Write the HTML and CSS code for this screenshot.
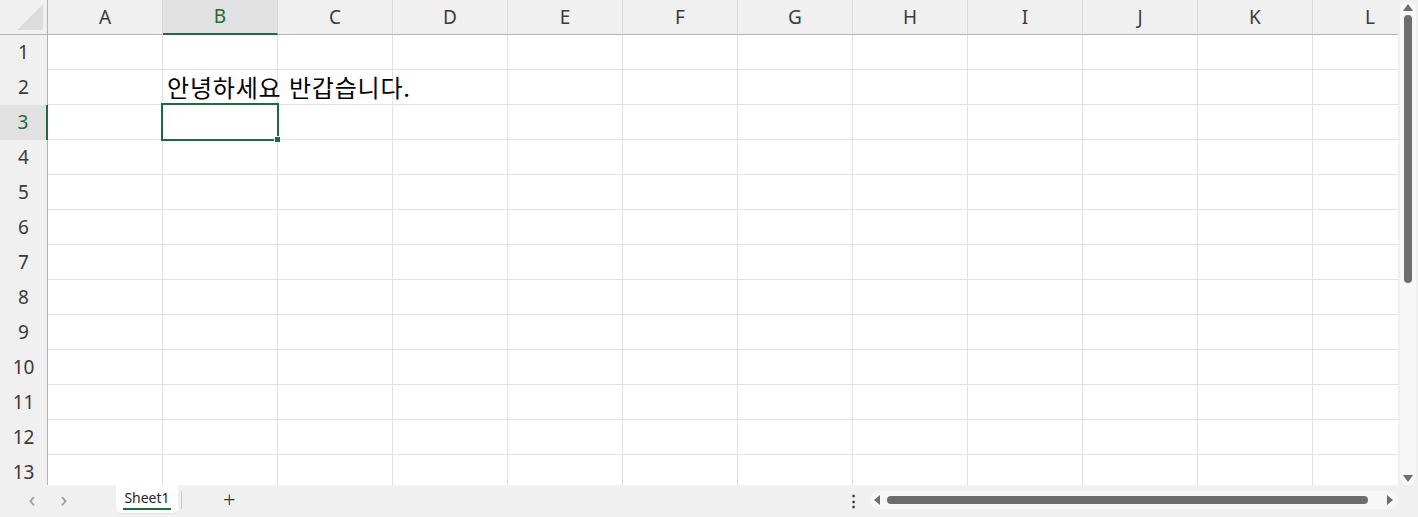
FILE: index.html
```html
<!DOCTYPE html>
<html lang="ko">
<head>
  <meta charset="UTF-8" />
  <title>Sheet1</title>
  <link rel="stylesheet" href="styles.css">
</head>
<body>
  <div class="app">
    <div class="main">
      <div class="sheet" id="sheet">
        <div class="row head" id="head">
          <div class="corner"><span class="tri"></span></div>
        </div>
      </div>
      <div class="vscroll">
        <span class="arrow up"></span>
        <div class="vthumb"></div>
        <div class="vfill"></div>
        <span class="arrow down"></span>
      </div>
    </div>

    <div class="bottombar">
      <div class="nav">
        <span class="chev">&#x2039;</span>
        <span class="chev">&#x203A;</span>
      </div>
      <div class="tab"><span class="tab-name">Sheet1</span></div>
      <span class="sep"></span>
      <span class="add">+</span>
      <div class="spacer"></div>
      <span class="dots">&#x22EE;</span>
      <div class="hscroll">
        <span class="arrow left"></span>
        <div class="hthumb"></div>
        <span class="arrow right"></span>
      </div>
    </div>
  </div>

  <script>
    const cols = ['A','B','C','D','E','F','G','H','I','J','K','L'];
    const sheet = document.getElementById('sheet');
    const head = document.getElementById('head');
    const data = { 'B2': '안녕하세요 반갑습니다.' };

    cols.forEach(c => {
      const h = document.createElement('div');
      h.className = 'col-h' + (c === 'B' ? ' active' : '');
      h.textContent = c;
      head.appendChild(h);
    });

    for (let r = 1; r <= 13; r++) {
      const row = document.createElement('div');
      row.className = 'row';
      const rh = document.createElement('div');
      rh.className = 'row-h' + (r === 3 ? ' active' : '');
      rh.textContent = r;
      row.appendChild(rh);
      cols.forEach(c => {
        const cell = document.createElement('div');
        cell.className = 'cell';
        if (c === 'B' && r === 3) cell.classList.add('selected');
        if (data[c + r]) {
          const t = document.createElement('span');
          t.className = 'val';
          t.textContent = data[c + r];
          cell.appendChild(t);
        }
        row.appendChild(cell);
      });
      sheet.appendChild(row);
    }
  </script>
</body>
</html>
```

FILE: styles.css
```css
*, *::before, *::after {
  box-sizing: border-box;
}
body {
  margin: 0;
  width: 1418px;
  height: 517px;
  overflow: hidden;
  background: #fff;
  font-family: 'Noto Sans', 'Noto Sans CJK KR', sans-serif;
}
.app {
  display: flex;
  flex-direction: column;
  height: 517px;
}
.main {
  display: flex;
  height: 485px;
  overflow: hidden;
}
.sheet {
  width: 1398px;
  overflow: hidden;
}
.row {
  display: flex;
  height: 35px;
}
.row.head {
  background: #f0f0f0;
}
.corner {
  position: relative;
  flex: 0 0 48px;
  height: 35px;
  border-right: 1px solid #b3b3b3;
  border-bottom: 1px solid #b3b3b3;
  background: #f0f0f0;
}
.tri {
  position: absolute;
  right: 4px;
  bottom: 4px;
  width: 26px;
  height: 26px;
  background: #dcdcdc;
  clip-path: polygon(100% 0, 100% 100%, 0 100%);
}
.col-h {
  flex: 0 0 115px;
  height: 35px;
  border-right: 1px solid #d9d9d9;
  border-bottom: 1px solid #b3b3b3;
  text-align: center;
  line-height: 34px;
  font-size: 19px;
  color: #3b3b3b;
}
.col-h.active {
  background: #e1e1e1;
  color: #1d6b3e;
  border-bottom: 2px solid #1d6b3e;
  line-height: 33px;
}
.row-h {
  flex: 0 0 48px;
  height: 35px;
  background: #f0f0f0;
  border-right: 1px solid #b3b3b3;
  text-align: center;
  line-height: 35px;
  font-size: 19px;
  color: #3b3b3b;
}
.row-h.active {
  background: #e1e1e1;
  color: #1d6b3e;
  border-right: 2px solid #1d6b3e;
}
.cell {
  position: relative;
  flex: 0 0 115px;
  height: 35px;
  border-right: 1px solid #e1e1e1;
  border-bottom: 1px solid #e1e1e1;
  white-space: nowrap;
}
.val {
  position: absolute;
  left: 4px;
  bottom: 2px;
  font-family: 'Noto Sans CJK KR', sans-serif;
  font-size: 24px;
  letter-spacing: 0.8px;
  line-height: 30px;
  color: #000;
  z-index: 1;
}
.cell.selected::after {
  content: '';
  position: absolute;
  left: -2px;
  top: -2px;
  width: 118px;
  height: 38px;
  border: 2px solid #1d6b3e;
  z-index: 2;
}
.cell.selected::before {
  content: '';
  position: absolute;
  right: -4px;
  bottom: -4px;
  width: 7px;
  height: 7px;
  background: #1d6b3e;
  border: 1px solid #fff;
  z-index: 3;
}

/* vertical scrollbar */
.vscroll {
  position: relative;
  flex: 0 0 20px;
  background: #f0f0f0;
  display: flex;
  flex-direction: column;
  align-items: center;
  padding: 4px 0 2px;
}
.vscroll::before {
  content: '';
  position: absolute;
  left: 2px;
  right: 2px;
  top: 2px;
  bottom: 0;
  background: #f7f7f7;
  border-radius: 8px;
}
.vthumb {
  position: relative;
  width: 8px;
  height: 268px;
  margin-top: 4px;
  border-radius: 4px;
  background: #6d6d6d;
}
.vfill {
  flex: 1;
}
.arrow {
  position: relative;
  flex: 0 0 auto;
  width: 0;
  height: 0;
}
.arrow.up {
  border-left: 5px solid transparent;
  border-right: 5px solid transparent;
  border-bottom: 7px solid #6d6d6d;
}
.arrow.down {
  border-left: 5px solid transparent;
  border-right: 5px solid transparent;
  border-top: 7px solid #6d6d6d;
  margin-bottom: 1px;
}
.arrow.left {
  border-top: 5px solid transparent;
  border-bottom: 5px solid transparent;
  border-right: 6px solid #6d6d6d;
}
.arrow.right {
  border-top: 5px solid transparent;
  border-bottom: 5px solid transparent;
  border-left: 6px solid #6d6d6d;
}

/* bottom bar */
.bottombar {
  display: flex;
  align-items: flex-start;
  height: 32px;
  background: #f0f0f0;
}
.nav {
  display: flex;
  gap: 16px;
  padding-left: 24px;
  width: 116px;
  height: 26px;
  align-items: center;
}
.chev {
  width: 16px;
  text-align: center;
  font-size: 22px;
  line-height: 22px;
  color: #9a9a9a;
}
.tab {
  position: relative;
  width: 62px;
  height: 28px;
  background: #fff;
  border-radius: 0 0 5px 5px;
  box-shadow: 0 1px 1px rgba(0,0,0,0.06);
  display: flex;
  justify-content: center;
  padding-top: 5px;
}
.tab-name {
  font-size: 14px;
  line-height: 16px;
  height: 20px;
  color: #242424;
  border-bottom: 2px solid #1d6b3e;
  padding: 0 1px;
}
.sep {
  width: 1px;
  height: 18px;
  margin: 6px 0 0 3px;
  background: #c8c8c8;
}
.add {
  margin-left: 41px;
  font-size: 22px;
  line-height: 28px;
  font-weight: 300;
  color: #333;
}
.spacer {
  flex: 1;
}
.dots {
  width: 6px;
  text-align: center;
  margin-top: 6px;
  margin-right: 18px;
  font-size: 15px;
  line-height: 18px;
  color: #333;
  font-weight: bold;
}
.hscroll {
  width: 528px;
  height: 18px;
  margin-top: 6px;
  margin-right: 20px;
  background: #f7f7f7;
  border-radius: 9px;
  display: flex;
  align-items: center;
  padding: 0 5px 0 4px;
}
.hthumb {
  flex: 1;
  height: 8px;
  border-radius: 4px;
  background: #6d6d6d;
  margin: 0 19px 0 7px;
}
```
